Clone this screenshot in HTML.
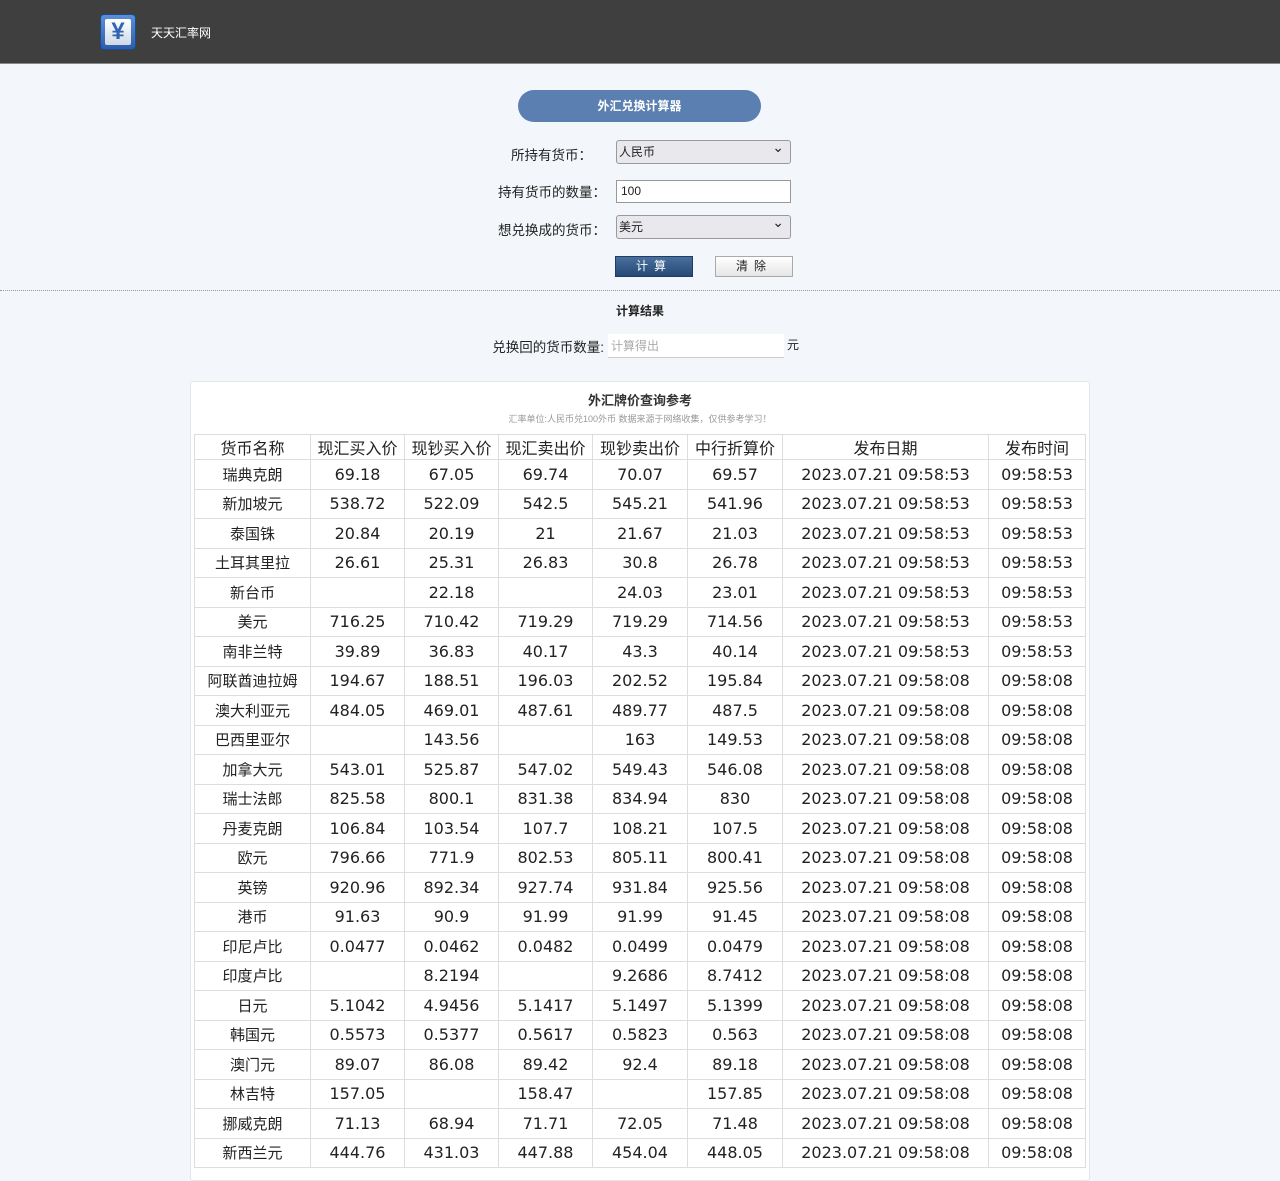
<!DOCTYPE html>
<html><head><meta charset="utf-8">
<style>
*{margin:0;padding:0;box-sizing:border-box}
body{width:1280px;height:1167px;overflow:hidden;background:#f3f6fa;font-family:"Liberation Sans","Noto Sans CJK SC",sans-serif;color:#222}
.top{height:64px;background:#3f3f3f;border-bottom:1px solid #888;position:relative}
.logo{position:absolute;left:100px;top:14px;width:36px;height:36px;border-radius:4px;background:linear-gradient(#5b8fd6,#2a5eab);border:1px solid #1d4a8a}
.logo div{position:absolute;left:4px;top:4px;width:26px;height:26px;background:linear-gradient(#fff,#cfd9e8);border-radius:2px;color:#2f63b3;font-weight:bold;font-size:24px;line-height:26px;text-align:center}
.site{position:absolute;left:151px;top:24px;color:#fff;font-size:12px}
.title{position:absolute;left:518px;top:90px;width:243px;height:32px;border-radius:16px;background:#5a7fb0;color:#fff;font-weight:bold;font-size:12px;text-align:center;line-height:32px}
.lbl{position:absolute;font-size:13.5px;text-align:right;width:200px}
.sel{position:absolute;left:616px;width:175px;height:24px;border:1px solid #999;border-radius:3px;background:#e9e9ed;font-size:12px;line-height:22px;padding-left:2px}
.sel:after{content:"⌄";position:absolute;right:6px;top:-5px;font-size:14px}
.inp{position:absolute;left:616px;top:180px;width:175px;height:23px;border:1px solid #999;background:#fff;font-size:12px;line-height:21px;padding-left:4px}
.btn{position:absolute;top:256px;width:78px;height:21px;font-size:12px;text-align:center;line-height:19px;letter-spacing:6px}
.hr{position:absolute;left:0;top:290px;width:1280px;border-top:1px dotted #999}
.card{position:absolute;left:190px;top:381px;width:900px;height:800px;background:#fff;border:1px solid #e3e6ea;border-radius:3px}
table{position:absolute;left:194px;top:434px;border-collapse:collapse;font-family:"DejaVu Sans","Noto Sans CJK SC",sans-serif;font-size:16px;color:#222}
td{border:1px solid #ddd;height:29.5px;text-align:center;padding:0}
tr.h td{font-family:"Liberation Sans","Noto Sans CJK SC",sans-serif;font-size:16px;height:24px;padding-top:0}
td:first-child{font-family:"Liberation Sans","Noto Sans CJK SC",sans-serif;font-size:15px}
</style></head><body>
<div class="top"><div class="logo"><div>¥</div></div><div class="site">天天汇率网</div></div>
<div class="title">外汇兑换计算器</div>
<div class="lbl" style="left:392px;top:144px">所持有货币：</div>
<div class="sel" style="top:140px">人民币</div>
<div class="lbl" style="left:406px;top:181px">持有货币的数量：</div>
<div class="inp">100</div>
<div class="lbl" style="left:406px;top:219px">想兑换成的货币：</div>
<div class="sel" style="top:215px">美元</div>
<div class="btn" style="left:615px;background:linear-gradient(#4a6f9c,#254a78);color:#fff;border:1px solid #1f3d66">计算</div>
<div class="btn" style="left:715px;background:linear-gradient(#fff,#e6e6e6);border:1px solid #aaa">清除</div>
<div class="hr"></div>
<div style="position:absolute;left:0;width:1280px;top:302px;text-align:center;font-size:12px;font-weight:bold">计算结果</div>
<div class="lbl" style="left:404px;top:336px">兑换回的货币数量:</div>
<div style="position:absolute;left:608px;top:334px;width:176px;height:24px;background:#fff;border-bottom:1px solid #ccc;color:#aaa;font-size:12px;line-height:24px;padding-left:3px">计算得出</div>
<div style="position:absolute;left:787px;top:336px;font-size:12px">元</div>
<div class="card"></div>
<div style="position:absolute;left:190px;width:900px;top:390px;text-align:center;font-size:13px;font-weight:bold;color:#333">外汇牌价查询参考</div>
<div style="position:absolute;left:190px;width:900px;top:412px;text-align:center;font-size:9px;color:#999">汇率单位:人民币兑100外币 数据来源于网络收集，仅供参考学习！</div>
<table>
<colgroup><col style="width:116px"><col style="width:94px"><col style="width:94px"><col style="width:94px"><col style="width:95px"><col style="width:95px"><col style="width:206px"><col style="width:97px"></colgroup>
<tr class="h"><td>货币名称</td><td>现汇买入价</td><td>现钞买入价</td><td>现汇卖出价</td><td>现钞卖出价</td><td>中行折算价</td><td>发布日期</td><td>发布时间</td></tr>
<tr><td>瑞典克朗</td><td>69.18</td><td>67.05</td><td>69.74</td><td>70.07</td><td>69.57</td><td>2023.07.21 09:58:53</td><td>09:58:53</td></tr>
<tr><td>新加坡元</td><td>538.72</td><td>522.09</td><td>542.5</td><td>545.21</td><td>541.96</td><td>2023.07.21 09:58:53</td><td>09:58:53</td></tr>
<tr><td>泰国铢</td><td>20.84</td><td>20.19</td><td>21</td><td>21.67</td><td>21.03</td><td>2023.07.21 09:58:53</td><td>09:58:53</td></tr>
<tr><td>土耳其里拉</td><td>26.61</td><td>25.31</td><td>26.83</td><td>30.8</td><td>26.78</td><td>2023.07.21 09:58:53</td><td>09:58:53</td></tr>
<tr><td>新台币</td><td></td><td>22.18</td><td></td><td>24.03</td><td>23.01</td><td>2023.07.21 09:58:53</td><td>09:58:53</td></tr>
<tr><td>美元</td><td>716.25</td><td>710.42</td><td>719.29</td><td>719.29</td><td>714.56</td><td>2023.07.21 09:58:53</td><td>09:58:53</td></tr>
<tr><td>南非兰特</td><td>39.89</td><td>36.83</td><td>40.17</td><td>43.3</td><td>40.14</td><td>2023.07.21 09:58:53</td><td>09:58:53</td></tr>
<tr><td>阿联酋迪拉姆</td><td>194.67</td><td>188.51</td><td>196.03</td><td>202.52</td><td>195.84</td><td>2023.07.21 09:58:08</td><td>09:58:08</td></tr>
<tr><td>澳大利亚元</td><td>484.05</td><td>469.01</td><td>487.61</td><td>489.77</td><td>487.5</td><td>2023.07.21 09:58:08</td><td>09:58:08</td></tr>
<tr><td>巴西里亚尔</td><td></td><td>143.56</td><td></td><td>163</td><td>149.53</td><td>2023.07.21 09:58:08</td><td>09:58:08</td></tr>
<tr><td>加拿大元</td><td>543.01</td><td>525.87</td><td>547.02</td><td>549.43</td><td>546.08</td><td>2023.07.21 09:58:08</td><td>09:58:08</td></tr>
<tr><td>瑞士法郎</td><td>825.58</td><td>800.1</td><td>831.38</td><td>834.94</td><td>830</td><td>2023.07.21 09:58:08</td><td>09:58:08</td></tr>
<tr><td>丹麦克朗</td><td>106.84</td><td>103.54</td><td>107.7</td><td>108.21</td><td>107.5</td><td>2023.07.21 09:58:08</td><td>09:58:08</td></tr>
<tr><td>欧元</td><td>796.66</td><td>771.9</td><td>802.53</td><td>805.11</td><td>800.41</td><td>2023.07.21 09:58:08</td><td>09:58:08</td></tr>
<tr><td>英镑</td><td>920.96</td><td>892.34</td><td>927.74</td><td>931.84</td><td>925.56</td><td>2023.07.21 09:58:08</td><td>09:58:08</td></tr>
<tr><td>港币</td><td>91.63</td><td>90.9</td><td>91.99</td><td>91.99</td><td>91.45</td><td>2023.07.21 09:58:08</td><td>09:58:08</td></tr>
<tr><td>印尼卢比</td><td>0.0477</td><td>0.0462</td><td>0.0482</td><td>0.0499</td><td>0.0479</td><td>2023.07.21 09:58:08</td><td>09:58:08</td></tr>
<tr><td>印度卢比</td><td></td><td>8.2194</td><td></td><td>9.2686</td><td>8.7412</td><td>2023.07.21 09:58:08</td><td>09:58:08</td></tr>
<tr><td>日元</td><td>5.1042</td><td>4.9456</td><td>5.1417</td><td>5.1497</td><td>5.1399</td><td>2023.07.21 09:58:08</td><td>09:58:08</td></tr>
<tr><td>韩国元</td><td>0.5573</td><td>0.5377</td><td>0.5617</td><td>0.5823</td><td>0.563</td><td>2023.07.21 09:58:08</td><td>09:58:08</td></tr>
<tr><td>澳门元</td><td>89.07</td><td>86.08</td><td>89.42</td><td>92.4</td><td>89.18</td><td>2023.07.21 09:58:08</td><td>09:58:08</td></tr>
<tr><td>林吉特</td><td>157.05</td><td></td><td>158.47</td><td></td><td>157.85</td><td>2023.07.21 09:58:08</td><td>09:58:08</td></tr>
<tr><td>挪威克朗</td><td>71.13</td><td>68.94</td><td>71.71</td><td>72.05</td><td>71.48</td><td>2023.07.21 09:58:08</td><td>09:58:08</td></tr>
<tr><td>新西兰元</td><td>444.76</td><td>431.03</td><td>447.88</td><td>454.04</td><td>448.05</td><td>2023.07.21 09:58:08</td><td>09:58:08</td></tr>
</table>
</body></html>
